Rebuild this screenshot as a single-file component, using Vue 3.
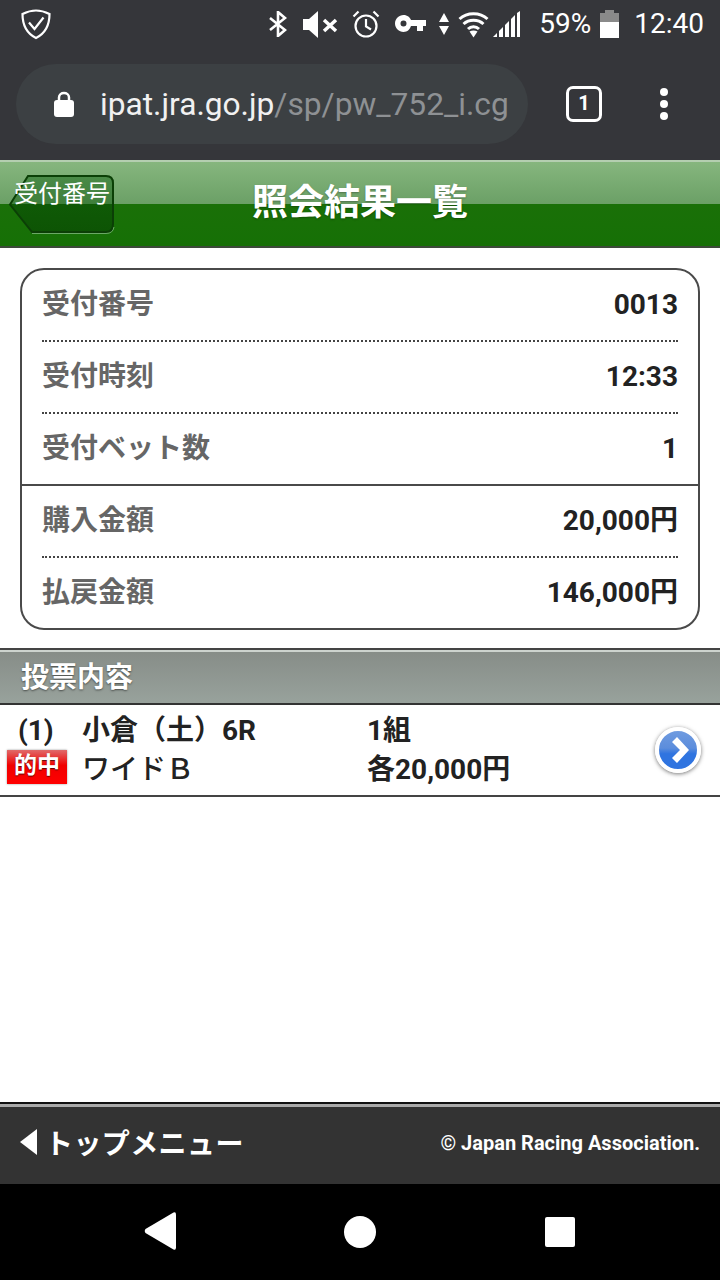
<script setup>
const infoTop = [
  { label: "受付番号", value: "0013" },
  { label: "受付時刻", value: "12:33" },
  { label: "受付ベット数", value: "1" },
]
const infoBottom = [
  { label: "購入金額", value: "20,000円" },
  { label: "払戻金額", value: "146,000円" },
]
</script>

<template>
  <div class="screen">
    <div class="status">
      <svg class="shield" width="32" height="32" viewBox="0 0 32 32" fill="none" stroke="#fff" stroke-width="2.2">
        <path d="M16 2.5C11 2.5 6.5 4 2.5 6C2.5 16 6 25 16 30C26 25 29.5 16 29.5 6C25.5 4 21 2.5 16 2.5Z" />
        <path d="M9 14.5L14.5 21L23.5 9.5" />
      </svg>
      <div class="status-right">
        <svg width="18" height="26" viewBox="0 0 18 26" fill="none" stroke="#fff" stroke-width="2.6">
          <path d="M1 7L16 19L9 25V1L16 7L1 19" />
        </svg>
        <svg class="gap-mute" width="35" height="27" viewBox="0 0 35 27" fill="#fff">
          <path d="M0 8H6L15 0V27L6 19H0Z" />
          <path d="M21 9L33 20M33 9L21 20" stroke="#fff" stroke-width="3.5" />
        </svg>
        <svg class="gap-alarm" width="28" height="28" viewBox="0 0 28 28" fill="none" stroke="#fff" stroke-width="2.2">
          <circle cx="14" cy="16" r="10.5" />
          <path d="M14 9V16.5L19 19.5M1.5 6.5L6.5 1.5M26.5 6.5L21.5 1.5" />
        </svg>
        <svg class="gap-key" width="31" height="18" viewBox="0 0 31 18" fill="#fff">
          <path fill-rule="evenodd" d="M8.5 0C12.5 0 15 2.5 16 5H31V11H28V16H22V11H16C15 14 12.5 17 8.5 17C4 17 0 13 0 8.5C0 4 4 0 8.5 0ZM8.5 5.5A3 3 0 1 0 8.5 11.5A3 3 0 1 0 8.5 5.5Z" />
        </svg>
        <svg class="gap-arrows" width="10" height="22" viewBox="0 0 10 22" fill="#fff">
          <path d="M5 0L10 9H0ZM0 13H10L5 22Z" />
        </svg>
        <svg class="gap-wifi" width="31" height="27" viewBox="0 0 31 27" fill="none" stroke="#fff" stroke-width="3">
          <path d="M1.5 8C9 1 22 1 29.5 8M5.5 13C11 8 20 8 25.5 13M10 18C13 15 18 15 21 18" />
          <path d="M11.5 20.5C14 19 17 19 19.5 20.5L15.5 26.5Z" fill="#fff" stroke="none" />
        </svg>
        <svg class="gap-signal" width="28" height="26" viewBox="0 0 28 26" fill="#fff">
          <path d="M0 26L4 22V26ZM6 26V20L10 16V26ZM12 26V14L16 10V26ZM18 26V8L22 4V26ZM24 26V2L27 0V26Z" />
        </svg>
        <span class="pct">59%</span>
        <svg class="gap-batt" width="19" height="28" viewBox="0 0 19 28">
          <path d="M5 0H14V3H19V12H0V3H5Z" fill="#8a8a8a" />
          <path d="M0 12H19V28H0Z" fill="#fff" />
        </svg>
        <span class="clock">12:40</span>
      </div>
    </div>

    <div class="toolbar">
      <div class="urlbar">
        <svg width="22" height="28" viewBox="0 0 22 28" fill="none">
          <path d="M6 12V7.5C6 1.5 16 1.5 16 7.5V12" stroke="#fff" stroke-width="2.5" />
          <rect x="1" y="10" width="20" height="17" rx="3" fill="#fff" />
        </svg>
        <div class="url"><span class="host">ipat.jra.go.jp</span><span class="path">/sp/pw_752_i.cg</span></div>
      </div>
      <div class="tabs">1</div>
      <div class="menu"><i></i><i></i><i></i></div>
    </div>

    <header class="title-bar">
      <div class="back-btn">
        <svg class="back-shape" width="108" height="62" viewBox="0 0 108 62">
          <defs>
            <linearGradient id="backfill" x1="0" y1="0" x2="0" y2="1">
              <stop offset="0" stop-color="#4a8a47" />
              <stop offset="0.5" stop-color="#3f7f3c" />
              <stop offset="0.5" stop-color="#0f5a06" />
              <stop offset="1" stop-color="#0d5404" />
            </linearGradient>
          </defs>
          <path d="M2 30.5L20 2H98Q105 2 105 9V50Q105 58 98 58H24Z" fill="url(#backfill)" stroke="#0b3f06" stroke-width="2" />
          <path d="M24 59.5H98Q105 59.5 106 53" fill="none" stroke="#6aa865" stroke-width="1" />
        </svg>
        <span class="back-text">受付番号</span>
      </div>
      <h1>照会結果一覧</h1>
    </header>

    <main class="content">
      <section class="card">
        <div class="group">
          <div v-for="row in infoTop" :key="row.label" class="row">
            <span class="label">{{ row.label }}</span>
            <span class="value">{{ row.value }}</span>
          </div>
        </div>
        <div class="group second">
          <div v-for="row in infoBottom" :key="row.label" class="row">
            <span class="label">{{ row.label }}</span>
            <span class="value">{{ row.value }}</span>
          </div>
        </div>
      </section>

      <div class="section-bar">投票内容</div>

      <div class="bet">
        <div class="bet-col-a">
          <div class="num">(1)</div>
          <div class="hit">的中</div>
        </div>
        <div class="bet-col-b">
          <div>小倉（土）6R</div>
          <div class="thin">ワイドＢ</div>
        </div>
        <div class="bet-col-c">
          <div>1組</div>
          <div>各20,000円</div>
        </div>
        <div class="go">
          <svg width="17" height="26" viewBox="0 0 17 26" fill="#fff">
            <path d="M0 5L5 0L17 13L5 26L0 21L8 13Z" />
          </svg>
        </div>
      </div>
    </main>

    <footer class="foot">
      <div class="foot-menu"><i class="tri"></i><span class="foot-text">トップメニュー</span></div>
      <div class="copy">© Japan Racing Association.</div>
    </footer>

    <nav class="nav">
      <svg width="32" height="38" viewBox="0 0 32 38" fill="#fff">
        <path d="M29.5 .5Q32 -.5 32 2.5V35.5Q32 38.5 29.5 37.5L1.5 21Q0 19 1.5 17Z" />
      </svg>
      <span class="nav-circle"></span>
      <span class="nav-square"></span>
    </nav>
  </div>
</template>

<style>
html, body { margin: 0; background: #fff; }
</style>

<style scoped>
.screen {
  width: 720px;
  height: 1280px;
  display: flex;
  flex-direction: column;
  overflow: hidden;
  background: #fff;
  font-family: "Noto Sans CJK JP", "Noto Sans", sans-serif;
}

.status {
  height: 48px;
  flex: none;
  box-sizing: border-box;
  background: #35363a;
  display: flex;
  align-items: center;
  justify-content: space-between;
  padding: 0 16px 0 20px;
}
.status-right { display: flex; align-items: center; }
.gap-mute { margin-left: 16px; }
.gap-alarm { margin-left: 14px; }
.gap-key { margin-left: 15px; }
.gap-arrows { margin-left: 13px; }
.gap-wifi { margin-left: 9px; }
.gap-signal { margin-left: 4px; }
.pct, .clock {
  font-family: Roboto, sans-serif;
  color: #fff;
  font-size: 28px;
  line-height: 32px;
}
.pct { margin-left: 18px; }
.gap-batt { margin-left: 9px; }
.clock { margin-left: 15px; }

.toolbar {
  height: 112px;
  flex: none;
  background: #35363a;
  display: flex;
  align-items: center;
  box-sizing: border-box;
  padding-left: 16px;
}
.urlbar {
  width: 512px;
  height: 80px;
  border-radius: 40px;
  background: #3c4043;
  display: flex;
  align-items: center;
  box-sizing: border-box;
  padding-left: 37px;
  gap: 25px;
  overflow: hidden;
}
.url {
  font-family: Roboto, sans-serif;
  font-size: 31.7px;
  white-space: nowrap;
}
.host { color: #f1f1f1; }
.path { color: #8e9194; }
.tabs {
  width: 36px;
  height: 36px;
  margin-left: 38px;
  box-sizing: border-box;
  border: 3.5px solid #fff;
  border-radius: 7px;
  color: #fff;
  font-family: Roboto, sans-serif;
  font-weight: 700;
  font-size: 20px;
  line-height: 29px;
  text-align: center;
}
.menu {
  display: flex;
  flex-direction: column;
  gap: 4px;
  margin-left: 58px;
}
.menu i {
  width: 8px;
  height: 8px;
  border-radius: 50%;
  background: #fff;
}

.title-bar {
  height: 88px;
  flex: none;
  box-sizing: border-box;
  position: relative;
  border-top: 2px solid #b4ceb0;
  border-bottom: 2px solid #3d4a3a;
  background: linear-gradient(#86b67e 0, #6ba066 50%, #1a7008 50%, #167006 100%);
  display: flex;
  align-items: center;
  justify-content: center;
  padding-bottom: 11px;
}
.title-bar h1 {
  margin: 0;
  color: #fff;
  font-size: 36px;
  font-weight: 700;
  line-height: 44px;
  text-shadow: 0 1px 2px rgba(0, 0, 0, 0.3);
}
.back-btn {
  position: absolute;
  left: 8px;
  top: 12px;
  width: 108px;
  height: 62px;
}
.back-shape { display: block; }
.back-text {
  position: absolute;
  left: 6px;
  top: 1px;
  color: #fff;
  font-size: 24px;
  line-height: 34px;
  white-space: nowrap;
}

.content { flex: 1; }
.card {
  margin: 20px 20px 0;
  height: 362px;
  box-sizing: border-box;
  border: 2px solid #4a4a4a;
  border-radius: 24px;
}
.group { padding: 0 20px; }
.group.second { border-top: 2px solid #4a4a4a; height: 144px; box-sizing: border-box; }
.row {
  height: 72px;
  box-sizing: border-box;
  display: flex;
  justify-content: space-between;
  align-items: center;
  border-bottom: 2px dotted #444;
  padding-bottom: 6px;
  font-size: 28px;
  font-weight: 700;
}
.group .row:last-child { border-bottom: 0; height: 70px; }
.label { color: #666; }
.value {
  color: #222;
  font-family: Roboto, "Noto Sans CJK JP", sans-serif;
  line-height: 40px;
  margin-top: 6px;
}

.section-bar {
  margin-top: 18px;
  height: 57px;
  box-sizing: border-box;
  border-top: 2px solid #444;
  border-bottom: 2px solid #333;
  box-shadow: inset 0 2px 0 #cdd3ce;
  background: linear-gradient(#868c87, #98a29c);
  color: #fff;
  font-size: 28px;
  font-weight: 700;
  line-height: 50px;
  padding-left: 21px;
  text-shadow: 0 1px 2px rgba(0, 0, 0, 0.5);
}

.bet {
  height: 92px;
  box-sizing: border-box;
  border-bottom: 2px solid #444;
  display: flex;
  position: relative;
  color: #222;
  font-family: Roboto, "Noto Sans CJK JP", sans-serif;
  font-size: 28px;
  font-weight: 700;
  line-height: 39px;
  padding-top: 6px;
}
.bet-col-a { width: 82px; flex: none; box-sizing: border-box; padding-left: 7px; }
.num { padding-left: 11px; }
.hit {
  width: 60px;
  height: 34px;
  background: linear-gradient(#e06a6a 0, #f00000 45%, #ff0000 100%);
  box-shadow: 0 0 2px rgba(0, 0, 0, 0.4);
  color: #fff;
  font-size: 23px;
  line-height: 32px;
  text-align: center;
  text-shadow: 0 1px 1px rgba(0, 0, 0, 0.6);
}
.bet-col-b { width: 285px; flex: none; }
.thin { font-weight: 500; }
.go {
  position: absolute;
  left: 655px;
  top: 22px;
  width: 46px;
  height: 46px;
  box-sizing: border-box;
  border: 4px solid #fff;
  border-radius: 50%;
  background: linear-gradient(#6f9be0 0, #5c8ddc 45%, #2f74e0 60%, #2f74e0 100%);
  box-shadow: 0 1px 4px rgba(0, 0, 0, 0.55);
  display: flex;
  align-items: center;
  justify-content: center;
}
.go svg { margin-left: 5px; }

.foot {
  height: 82px;
  flex: none;
  box-sizing: border-box;
  border-top: 2px solid #111;
  box-shadow: inset 0 3px 0 #aaa;
  background: #333;
  display: flex;
  align-items: center;
  justify-content: space-between;
  padding: 0 20px 4px;
  color: #fff;
  font-weight: 700;
}
.foot-menu {
  display: flex;
  align-items: center;
  gap: 8px;
}
.foot-text {
  font-size: 28px;
  letter-spacing: 0.4px;
}
.tri {
  width: 0;
  height: 0;
  border-top: 13px solid transparent;
  border-bottom: 13px solid transparent;
  border-right: 17px solid #fff;
}
.copy {
  font-family: Roboto, sans-serif;
  font-size: 20px;
  margin-top: 2px;
}

.nav {
  height: 96px;
  flex: none;
  background: #000;
  display: flex;
  align-items: center;
  position: relative;
}
.nav svg { position: absolute; left: 144px; top: 28px; }
.nav-circle {
  position: absolute;
  left: 344px;
  top: 32px;
  width: 32px;
  height: 32px;
  border-radius: 50%;
  background: #fff;
}
.nav-square {
  position: absolute;
  left: 545px;
  top: 33px;
  width: 30px;
  height: 30px;
  border-radius: 2px;
  background: #fff;
}
</style>
